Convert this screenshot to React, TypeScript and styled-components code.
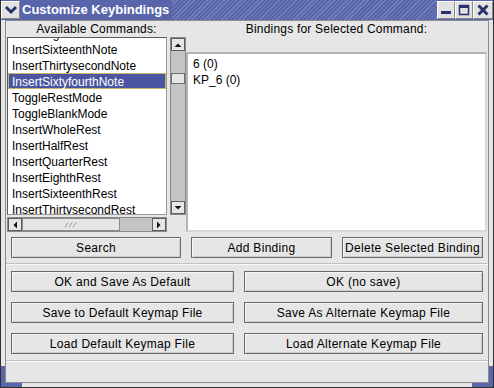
import React from "react";
import styled, { createGlobalStyle } from "styled-components";

const GlobalStyle = createGlobalStyle`
  body {
    margin: 0;
    background: #e6e6e6;
    font-family: "Liberation Sans", Arial, sans-serif;
  }
`;

const BLUE = "#5965ab";
const NAVY = "#27306a";

const Window = styled.div`
  width: 494px;
  height: 388px;
  box-sizing: border-box;
  display: grid;
  grid-template-columns: 4px 1fr 4px;
  grid-template-rows: 20px 1fr 4px;
  border: 1px solid #2e2e2e;
  border-top: none;
  background: #e6e6e6;
  overflow: hidden;
`;

const TitleBar = styled.div`
  grid-column: 1 / -1;
  display: flex;
  align-items: stretch;
  background: ${BLUE};
`;

const TitleButton = styled.div<{ $w: number }>`
  width: ${(p) => p.$w}px;
  box-sizing: border-box;
  margin: 1px 0;
  display: flex;
  align-items: center;
  justify-content: center;
  background: #e2e2e2;
  border-top: 1px solid #ffffff;
  border-left: 1px solid #ffffff;
  border-right: 1px solid #8a8a8a;
  border-bottom: 1px solid #8a8a8a;
`;

const TitleText = styled.div`
  padding: 0 3px 0 2px;
  color: #ffffff;
  font-weight: bold;
  font-size: 13px;
  line-height: 20px;
  white-space: nowrap;
`;

const Stripes = styled.div`
  flex: 1;
  background: repeating-linear-gradient(
    -45deg,
    ${BLUE} 0px,
    ${BLUE} 2px,
    #7480c0 2px,
    #7480c0 3px
  );
`;

const SideFrame = styled.div`
  background: linear-gradient(
    to bottom,
    #e6e6e6 calc(100% - 17px),
    ${BLUE} calc(100% - 17px)
  );
`;

const BottomFrame = styled.div`
  grid-column: 1 / -1;
  background: linear-gradient(
    to right,
    ${BLUE} 21px,
    #e6e6e6 21px,
    #e6e6e6 calc(100% - 21px),
    ${BLUE} calc(100% - 21px)
  );
`;

const Content = styled.div`
  border: 1px solid #8c8c8c;
  display: flex;
  flex-direction: column;
  padding: 0 1px;
  min-height: 0;
  font-size: 12px;
  color: #000;
`;

const Top = styled.div`
  display: flex;
`;

const Column = styled.div<{ $w: number }>`
  width: ${(p) => p.$w}px;
  display: flex;
  flex-direction: column;
`;

const Label = styled.div`
  height: 16px;
  line-height: 16px;
  text-align: center;
  letter-spacing: 0.2px;
  white-space: nowrap;
`;

const ListRow = styled.div`
  display: flex;
  gap: 3px;
  height: 178px;
`;

const ListBox = styled.div`
  width: 161px;
  box-sizing: border-box;
  background: #ffffff;
  border: 1px solid #9a9a9a;
  border-top-color: #5a5a5a;
  border-left-color: #5a5a5a;
  overflow: hidden;
`;

const ListInner = styled.div`
  margin-top: -13px;
`;

const Item = styled.div<{ $selected?: boolean }>`
  height: 16px;
  line-height: 16px;
  box-sizing: border-box;
  padding-left: 3px;
  white-space: nowrap;
  border: 1px solid ${(p) => (p.$selected ? "#c9b36a" : "transparent")};
  background: ${(p) => (p.$selected ? "#4b56a2" : "transparent")};
  color: ${(p) => (p.$selected ? "#ffffff" : "#000000")};
`;

const VScroll = styled.div`
  width: 16px;
  box-sizing: border-box;
  border: 1px solid #8a8a8a;
  background: #c4c4c4;
  display: flex;
  flex-direction: column;
  justify-content: space-between;
`;

const HScroll = styled.div`
  margin-top: 2px;
  width: 160px;
  height: 15px;
  box-sizing: border-box;
  border: 1px solid #8a8a8a;
  background: #c4c4c4;
  display: flex;
`;

const ArrowButton = styled.div`
  width: 14px;
  height: 13px;
  box-sizing: border-box;
  background: #e6e6e6;
  border: 1px solid #5e5e5e;
  display: flex;
  align-items: center;
  justify-content: center;
  flex-shrink: 0;
`;

const VThumb = styled.div`
  height: 11px;
  box-sizing: border-box;
  background: #e6e6e6;
  border: 1px solid #6e6e6e;
`;

const VTrack = styled.div`
  flex: 1;
  padding-top: 22px;
`;

const HThumb = styled.div`
  width: 98px;
  box-sizing: border-box;
  background: #e6e6e6;
  border: 1px solid #8a8a8a;
  display: flex;
  align-items: center;
  justify-content: center;
`;

const HTrack = styled.div`
  flex: 1;
`;

const Bindings = styled.div`
  margin-top: 15px;
  height: 180px;
  box-sizing: border-box;
  background: #ffffff;
  border: 2px solid #b4b4b4;
  border-right-color: #d8d8d8;
  border-bottom-color: #d8d8d8;
  padding: 2px 5px;
`;

const BindingLine = styled.div`
  height: 16px;
  line-height: 16px;
`;

const ButtonRow = styled.div`
  display: flex;
  gap: 10px;
  padding-left: 4px;
  margin-top: 5px;
`;

const Button = styled.div<{ $w?: number }>`
  width: ${(p) => (p.$w ? `${p.$w}px` : "auto")};
  height: 21px;
  box-sizing: border-box;
  background: #e6e6e6;
  border: 1px solid #6a6a6a;
  box-shadow: inset 1px 1px #f6f6f6, inset -1px -1px #cccccc;
  display: flex;
  align-items: center;
  justify-content: center;
  letter-spacing: 0.3px;
  white-space: nowrap;
  overflow: hidden;
  font-size: 12px;
`;

const Separator = styled.div<{ $top: number }>`
  margin: ${(p) => p.$top}px -1px 0;
  border-top: 1px solid #c2c2c2;
  border-bottom: 1px solid #f8f8f8;
`;

const ButtonGrid = styled.div`
  display: grid;
  grid-template-columns: 223px 239px;
  column-gap: 10px;
  row-gap: 10px;
  padding-left: 4px;
  margin-top: 6px;
`;

const Tri = ({ dir }: { dir: "up" | "down" | "left" | "right" }) => {
  const pts = {
    up: "0.5,5 4,1.5 7.5,5",
    down: "0.5,1 4,4.5 7.5,1",
    left: "5,0.5 1.5,4 5,7.5",
    right: "1,0.5 4.5,4 1,7.5",
  }[dir];
  const horiz = dir === "left" || dir === "right";
  return (
    <svg width={horiz ? 6 : 8} height={horiz ? 8 : 6} viewBox={horiz ? "0 0 6 8" : "0 0 8 6"}>
      <polygon points={pts} fill="#111" />
    </svg>
  );
};

const commands = [
  "InsertEighthNote",
  "InsertSixteenthNote",
  "InsertThirtysecondNote",
  "InsertSixtyfourthNote",
  "ToggleRestMode",
  "ToggleBlankMode",
  "InsertWholeRest",
  "InsertHalfRest",
  "InsertQuarterRest",
  "InsertEighthRest",
  "InsertSixteenthRest",
  "InsertThirtysecondRest",
  "InsertSixtyfourthRest",
];

export default function App() {
  return (
    <>
      <GlobalStyle />
      <Window>
        <TitleBar>
          <TitleButton $w={19}>
            <svg width="14" height="10" viewBox="0 0 14 10">
              <polyline points="2,2 7,7 12,2" fill="none" stroke={NAVY} strokeWidth="3" />
            </svg>
          </TitleButton>
          <TitleText>Customize Keybindings</TitleText>
          <Stripes />
          <TitleButton $w={18}>
            <svg width="12" height="12" viewBox="0 0 12 12">
              <rect x="1" y="7" width="10" height="3" fill={NAVY} />
            </svg>
          </TitleButton>
          <TitleButton $w={18}>
            <svg width="12" height="12" viewBox="0 0 12 12">
              <rect x="1.5" y="1.5" width="9" height="9" fill="none" stroke={NAVY} strokeWidth="1.5" />
              <rect x="1" y="1" width="10" height="3" fill={NAVY} />
            </svg>
          </TitleButton>
          <TitleButton $w={20}>
            <svg width="12" height="12" viewBox="0 0 12 12">
              <path d="M1.5 1.5 L10.5 10.5 M10.5 1.5 L1.5 10.5" stroke={NAVY} strokeWidth="3" />
            </svg>
          </TitleButton>
        </TitleBar>

        <SideFrame />
        <Content>
          <Top>
            <Column $w={179}>
              <Label>Available Commands:</Label>
              <ListRow>
                <ListBox>
                  <ListInner>
                    {commands.map((c) => (
                      <Item key={c} $selected={c === "InsertSixtyfourthNote"}>
                        {c}
                      </Item>
                    ))}
                  </ListInner>
                </ListBox>
                <VScroll>
                  <ArrowButton>
                    <Tri dir="up" />
                  </ArrowButton>
                  <VTrack>
                    <VThumb />
                  </VTrack>
                  <ArrowButton>
                    <Tri dir="down" />
                  </ArrowButton>
                </VScroll>
              </ListRow>
              <HScroll>
                <ArrowButton>
                  <Tri dir="left" />
                </ArrowButton>
                <HThumb>
                  <svg width="14" height="6" viewBox="0 0 14 6">
                    <path d="M1 5.5 L4 0.5 M5 5.5 L8 0.5 M9 5.5 L12 0.5" stroke="#9a9a9a" strokeWidth="1" />
                  </svg>
                </HThumb>
                <HTrack />
                <ArrowButton>
                  <Tri dir="right" />
                </ArrowButton>
              </HScroll>
            </Column>
            <Column $w={301}>
              <Label>Bindings for Selected Command:</Label>
              <Bindings>
                <BindingLine>6 (0)</BindingLine>
                <BindingLine>KP_6 (0)</BindingLine>
              </Bindings>
            </Column>
          </Top>

          <ButtonRow>
            <Button $w={170}>Search</Button>
            <Button $w={141}>Add Binding</Button>
            <Button $w={141}>Delete Selected Binding</Button>
          </ButtonRow>

          <Separator $top={5} />

          <ButtonGrid>
            <Button>OK and Save As Default</Button>
            <Button>OK (no save)</Button>
            <Button>Save to Default Keymap File</Button>
            <Button>Save As Alternate Keymap File</Button>
            <Button>Load Default Keymap File</Button>
            <Button>Load Alternate Keymap File</Button>
          </ButtonGrid>

          <Separator $top={6} />
        </Content>
        <SideFrame />
        <BottomFrame />
      </Window>
    </>
  );
}
